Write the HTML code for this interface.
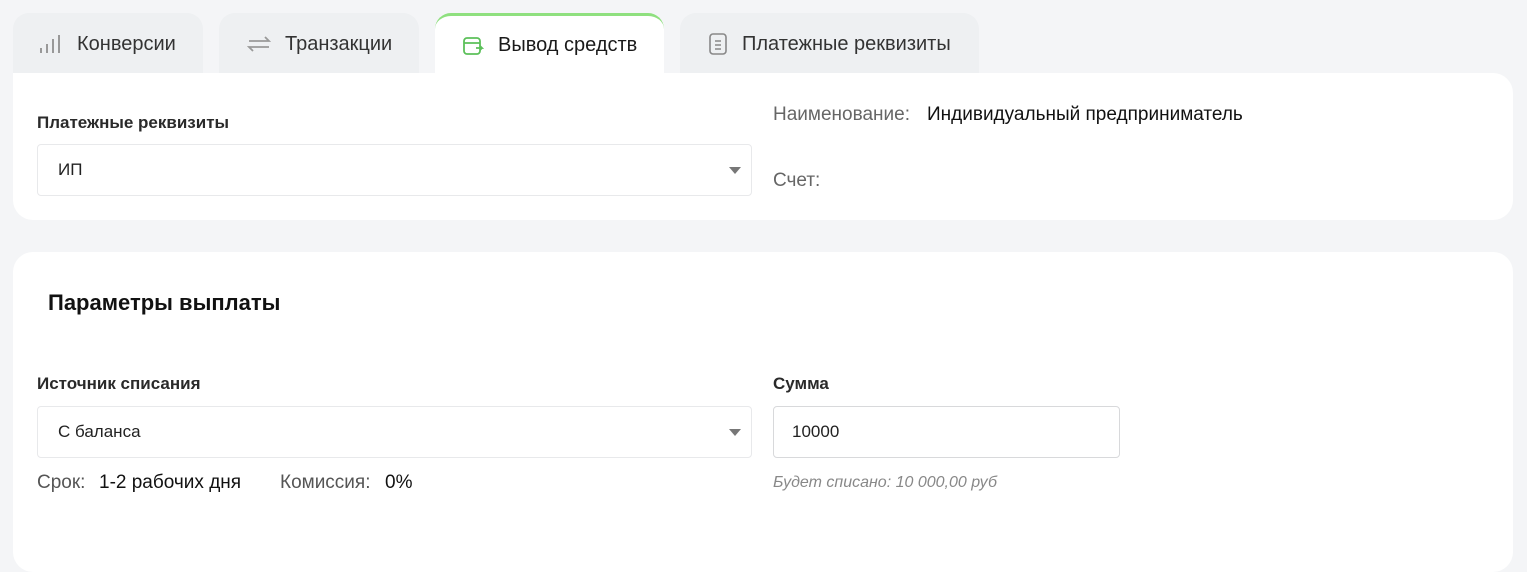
<!DOCTYPE html>
<html><head><meta charset="utf-8"><style>
*{box-sizing:border-box;margin:0;padding:0}
body{width:1527px;height:549px;background:#f4f5f7;font-family:"Liberation Sans",sans-serif;position:relative;overflow:hidden;color:#1a1a1a}
.tab{position:absolute;top:13px;height:62px;background:#eef0f2;border-radius:16px 16px 0 0;display:flex;align-items:center;font-size:20px;color:#333}
.tab svg{margin-right:14px}
.card{position:absolute;left:13px;width:1500px;background:#fff;border-radius:20px}
.lbl{position:absolute;font-size:17px;font-weight:bold;color:#2a2a2a}
.sel{position:absolute;height:52px;border:1px solid #e8e9eb;border-radius:4px;font-size:17px;padding-left:20px;display:flex;align-items:center;color:#222}
.sel .ar{position:absolute;right:10px;top:22px;width:0;height:0;border-left:6px solid transparent;border-right:6px solid transparent;border-top:7px solid #777}
.t{position:absolute;font-size:19px}
</style></head><body>
<div class="tab" style="left:13px;width:190px;padding-left:26px"><svg width="24" height="22" viewBox="0 0 24 22" fill="none" stroke="#999" stroke-width="2"><path d="M2 20v-5M8 20v-9M14 20v-14M20 20v-18"/></svg>Конверсии</div>
<div class="tab" style="left:219px;width:200px;padding-left:28px"><svg width="24" height="20" viewBox="0 0 24 20" fill="none" stroke="#999" stroke-width="1.8"><path d="M2 7h20l-4-4M22 13H2l4 4"/></svg>Транзакции</div>
<div class="tab" style="left:435px;width:229px;padding-left:27px;background:#fff;border-top:3px solid #8fe07f;color:#1a1a1a;height:62px"><svg width="22" height="20" viewBox="0 0 22 20" fill="none" stroke="#5cc05a" stroke-width="1.8"><rect x="2" y="2" width="16" height="16" rx="3"/><path d="M2 7h16M14 12h6l-2-2M20 12l-2 2"/></svg>Вывод средств</div>
<div class="tab" style="left:680px;width:299px;padding-left:28px"><svg width="20" height="24" viewBox="0 0 20 24" fill="none" stroke="#888" stroke-width="1.6"><rect x="2" y="2" width="16" height="20" rx="3"/><path d="M7 9h6M7 13h6M7 17h6"/></svg>Платежные реквизиты</div>
<div class="card" style="top:73px;height:147px;border-top-left-radius:0">
<div class="lbl" style="left:24px;top:40px">Платежные реквизиты</div>
<div class="sel" style="left:24px;top:71px;width:715px">ИП<span class="ar"></span></div>
<div class="t" style="left:760px;top:31px;color:#666">Наименование:</div>
<div class="t" style="left:914px;top:31px;color:#111">Индивидуальный предприниматель</div>
<div class="t" style="left:760px;top:97px;color:#666">Счет:</div>
</div>
<div class="card" style="top:252px;height:320px">
<div style="position:absolute;left:35px;top:38px;font-size:22px;font-weight:bold;color:#111">Параметры выплаты</div>
<div class="lbl" style="left:24px;top:122px">Источник списания</div>
<div class="sel" style="left:24px;top:154px;width:715px">С баланса<span class="ar"></span></div>
<div class="t" style="left:24px;top:220px;color:#555">Срок:</div>
<div class="t" style="left:86px;top:220px;color:#111">1-2 рабочих дня</div>
<div class="t" style="left:267px;top:220px;color:#555">Комиссия:</div>
<div class="t" style="left:372px;top:220px;color:#111">0%</div>
<div class="lbl" style="left:760px;top:122px">Сумма</div>
<div class="sel" style="left:760px;top:154px;width:347px;border-color:#d8d9db;padding-left:18px">10000</div>
<div style="position:absolute;left:760px;top:222px;font-size:16px;font-style:italic;color:#888">Будет списано: 10 000,00 руб</div>
</div>
</body></html>
